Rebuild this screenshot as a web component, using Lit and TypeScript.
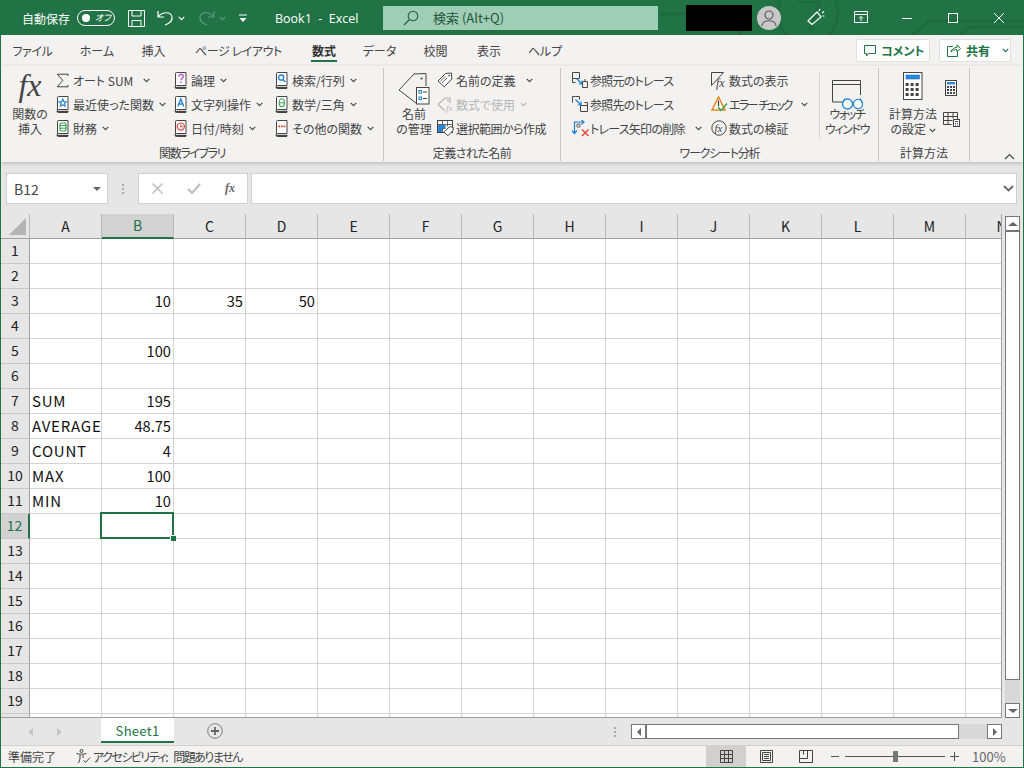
import { LitElement, css, html, svg, nothing } from "lit";
import { customElement } from "lit/decorators.js";

const GREEN = "#217346";
const COLS = "ABCDEFGHIJKLMN".split("");

// cell contents, keyed by row then column
const CELLS: Record<number, Record<string, string>> = {
  3: { B: "10", C: "35", D: "50" },
  5: { B: "100" },
  7: { A: "SUM", B: "195" },
  8: { A: "AVERAGE", B: "48.75" },
  9: { A: "COUNT", B: "4" },
  10: { A: "MAX", B: "100" },
  11: { A: "MIN", B: "10" },
};

const chev = (c = "#444") => html`<svg class="chev" width="7" height="5" viewBox="0 0 7 5">
  <path d="M.7.8 3.5 3.6 6.3.8" fill="none" stroke=${c} stroke-width="1.1" />
</svg>`;

const book = (glyph: unknown) => html`<svg width="13" height="17" viewBox="0 0 13 17">
  <path d="M1.5 14V1.5a1 1 0 0 1 1-1h9.5v13H2.5a1 1 0 0 0 0 3H12" fill="#fff" stroke="#444" />
  <path d="M1 15.5H12.5" stroke="#444" stroke-width="1.4" />
  ${glyph}
</svg>`;

const sigma = html`<svg width="13" height="15" viewBox="0 0 13 15">
  <path d="M12 3V1.2H1.2L6.8 7.4 1.2 13.8H12V12" fill="none" stroke="#444" stroke-width="1" />
</svg>`;

const gStar = svg`<path d="M6.8 3 7.9 5.6 10.5 5.8 8.5 7.5 9.2 10.2 6.8 8.8 4.4 10.2 5.1 7.5 3.1 5.8 5.7 5.6Z" fill="none" stroke="#2b88d8" stroke-width="1.2" />`;
const gDb = svg`<rect x="4" y="3" width="6" height="8" rx="1.5" fill="none" stroke="#33a04e" stroke-width="1.2" /><path d="M4 5.6h6M4 8.2h6" stroke="#33a04e" />`;
const gQ = svg`<path d="M4.8 4.4c0-2.6 4.4-2.6 4.4 0 0 1.8-2.2 1.8-2.2 3.8" fill="none" stroke="#b146c2" stroke-width="1.3" /><path d="M7 9.4v1.6" stroke="#b146c2" stroke-width="1.3" />`;
const gA = svg`<path d="M3.8 10.6 6.8 2.8 9.8 10.6M5 8h3.6" fill="none" stroke="#1b7fd0" stroke-width="1.3" />`;
const gClock = svg`<circle cx="6.8" cy="6.6" r="3.6" fill="none" stroke="#e03c31" stroke-width="1.2" /><path d="M6.8 4.6v2.2h2" fill="none" stroke="#e03c31" />`;
const gLens = svg`<circle cx="6.2" cy="5.6" r="2.6" fill="none" stroke="#1b7fd0" stroke-width="1.3" /><path d="M8.2 7.6 10.4 10" stroke="#1b7fd0" stroke-width="1.4" />`;
const gTheta = svg`<ellipse cx="6.8" cy="6.8" rx="2.6" ry="4" fill="none" stroke="#33a04e" stroke-width="1.1" /><path d="M4.4 6.8h4.8" stroke="#33a04e" />`;
const gDots = svg`<path d="M3.4 6.4h1.8M6 6.4h1.8M8.6 6.4h1.8" stroke="#e03c31" stroke-width="1.6" />`;

const tagSmall = (c = "#444") => html`<svg width="16" height="16" viewBox="0 0 16 16">
  <path d="M1 9 8.5 1.5 14.5 1 14.8 7 7.2 14.8Z" fill="#fff" stroke=${c} />
  <path d="M3.4 9.2 8.6 4M5 11 10.2 5.8" stroke=${c} stroke-width=".8" />
  <circle cx="12.2" cy="3.6" r=".9" fill=${c} />
</svg>`;

const tagOff = html`<svg width="18" height="17" viewBox="0 0 18 17">
  <path d="M1 8.5 8 2h5v5M7.5 14.5 1 8.5" fill="none" stroke="#b5b5b5" stroke-width="1.2" />
  <circle cx="11" cy="4.4" r=".9" fill="#b5b5b5" />
  <text x="9" y="15" font-size="9" font-style="italic" font-family="Liberation Serif" fill="#b5b5b5">fx</text>
</svg>`;

const selRange = html`<svg width="17" height="16" viewBox="0 0 17 16">
  <rect x=".5" y=".5" width="15" height="12" fill="#fff" stroke="#444" />
  <path d="M5.5.5v12M10.5.5v6M.5 4.5h15M.5 8.5h8" stroke="#444" stroke-width=".8" />
  <rect x="1" y="5" width="4.4" height="7" fill="#2b88d8" /><rect x="5.6" y="5" width="3" height="3.4" fill="#2b88d8" />
  <path d="M7 12.2 12.4 6.8 16 7 16.2 10.4 10.8 15.6Z" fill="#fff" stroke="#444" />
</svg>`;

const tagLarge = html`<svg width="32" height="33" viewBox="0 0 32 33">
  <path d="M1 18 16 2 28 1.5V14M18 31 1 18" fill="none" stroke="#444" />
  <circle cx="23.5" cy="6.5" r="1.1" fill="#444" />
  <rect x="18.5" y="15.5" width="12.5" height="16.5" fill="#fff" stroke="#444" />
  <rect x="21" y="18.5" width="2.6" height="2.6" fill="none" stroke="#1b7fd0" /><path d="M25 20h4" stroke="#444" />
  <rect x="21" y="25" width="2.6" height="2.6" fill="none" stroke="#1b7fd0" /><path d="M25 26.5h4" stroke="#444" />
</svg>`;

const tracePrec = html`<svg width="16" height="16" viewBox="0 0 16 16">
  <path d="M.5.5h7v6h-7zM.5 6.5v4h3" fill="none" stroke="#444" />
  <path d="M10.5 9.5h5v6h-5zM13 9.5V7" fill="none" stroke="#444" />
  <path d="M4.5 6.5 10 12M10 8.6V12H6.6" fill="none" stroke="#1b7fd0" stroke-width="1.2" />
</svg>`;

const traceDep = html`<svg width="16" height="16" viewBox="0 0 16 16">
  <path d="M3.5.5h-3v6M3.5.5h4v3" fill="none" stroke="#444" />
  <path d="M8.5 9.5h7v6h-7zM15.5 9.5V6.5h-3" fill="none" stroke="#444" />
  <path d="M3.5 3.5 9 9M9 5.6V9H5.6" fill="none" stroke="#1b7fd0" stroke-width="1.2" />
</svg>`;

const traceDel = html`<svg width="18" height="17" viewBox="0 0 18 17">
  <path d="M2.5 13V2h9" fill="none" stroke="#1b7fd0" stroke-width="1.2" />
  <path d="M0 10.5 2.5 13.5 5 10.5M9.5 0 12 2 9.5 4.2" fill="none" stroke="#1b7fd0" stroke-width="1.2" />
  <path d="M5 4h3v3H5z" fill="none" stroke="#444" stroke-width=".8" />
  <path d="M10 9.5 16.5 16M16.5 9.5 10 16" stroke="#e8412f" stroke-width="1.4" />
</svg>`;

const showFx = html`<svg class="open" width="17" height="17" viewBox="0 0 17 17">
  <path d="M12.5.5H.5v13L12.5.5" fill="none" stroke="#444" />
  <text x="5" y="14.5" font-size="12" font-style="italic" font-family="Liberation Serif" fill="#444">fx</text>
</svg>`;

const errCheck = html`<svg width="17" height="16" viewBox="0 0 17 16">
  <path d="M7.5 1 1 14H14Z" fill="#fff" stroke="#e8861c" stroke-width="1.5" />
  <path d="M7.5 4.5V10" stroke="#444" stroke-width="1.3" />
  <path d="M7 11 10 14.5 16 7.5" fill="none" stroke="#33a04e" stroke-width="1.3" />
</svg>`;

const evalFx = html`<svg width="16" height="16" viewBox="0 0 16 16">
  <circle cx="8" cy="8" r="7.2" fill="none" stroke="#444" />
  <text x="3.4" y="12" font-size="11" font-style="italic" font-family="Liberation Serif" fill="#444">fx</text>
</svg>`;

const watch = html`<svg width="31" height="31" viewBox="0 0 31 31">
  <path d="M10 22H.5V.5h28V15M.5 4.5h28" fill="none" stroke="#444" />
  <circle cx="15.5" cy="24" r="5" fill="#fff" stroke="#2b88d8" stroke-width="1.4" />
  <circle cx="26" cy="24" r="4.6" fill="#fff" stroke="#2b88d8" stroke-width="1.4" />
  <path d="M20.5 23.5h1M10.5 23 13 18.5M30.5 23 28 18.5" fill="none" stroke="#2b88d8" stroke-width="1.2" />
</svg>`;

const calcGrid = (n: number, s: number, g: number, x0: number, y0: number, rows: number) =>
  Array.from({ length: rows * n }, (_, i) =>
    svg`<rect x=${x0 + (i % n) * (s + g)} y=${y0 + Math.floor(i / n) * (s + g)} width=${s} height=${s} fill="#444" />`,
  );

const calcLarge = html`<svg width="20" height="28" viewBox="0 0 20 28">
  <rect x=".5" y=".5" width="18.5" height="27" fill="#fff" stroke="#444" />
  <rect x="3" y="3" width="13.5" height="4" fill="#2b88d8" stroke="#1b6ec2" stroke-width=".6" />
  ${calcGrid(3, 3, 2, 2.6, 11, 3)}
</svg>`;

const calcSmall = html`<svg width="12" height="16" viewBox="0 0 12 16">
  <rect x=".5" y=".5" width="11" height="15" fill="#fff" stroke="#444" />
  <rect x="2" y="2" width="8" height="2.4" fill="#2b88d8" />
  ${calcGrid(3, 2, 1, 2, 6, 3)}
</svg>`;

const sheetCalc = html`<svg width="17" height="15" viewBox="0 0 17 15">
  <path d="M.5 12.5V.5h14V7M.5 4.5h14M.5 8.5h9M.5 12.5h8M5 .5v12M10 .5v6" fill="none" stroke="#444" />
  <rect x="10.5" y="7.5" width="6" height="7" fill="#fff" stroke="#444" />
  <path d="M12 9.5h3M12 11.5h1M14 11.5h1M12 13h1M14 13h1" stroke="#444" stroke-width=".9" />
</svg>`;

const smallItem = (icon: unknown, label: string, arrow: "" | "near" | "far" = "near", off = false, cls = "") =>
  html`<div class="item ${off ? "off" : ""}">
    <span class="ico">${icon}</span><span class=${cls}>${label}</span>
    ${arrow ? html`<span class=${arrow}>${chev(off ? "#b5b5b5" : "#444")}</span>` : nothing}
  </div>`;

@customElement("app-root")
export class AppRoot extends LitElement {
  private titleBar() {
    return html`<header class="title">
      <svg class="circuit" width="1024" height="34" viewBox="0 0 1024 34">
        <g fill="none" stroke="#1c6a3e" stroke-width="3">
          <circle cx="808" cy="12" r="30" />
          <path d="M798 0h22l-10 30" />
          <path d="M660 13h60l22 20M912 34l18-14h94M960 34l10-8h54" />
        </g>
      </svg>
      <span class="auto">自動保存</span>
      <span class="toggle"><i></i><em>オフ</em></span>
      <svg class="i-save" width="17" height="17" viewBox="0 0 17 17">
        <path d="M.5.5h16v16H.5zM4 .5v5.5h9V.5M4 16.5V10.5h9v6" fill="none" stroke="#fff" />
      </svg>
      <svg class="i-undo" width="17" height="16" viewBox="0 0 17 16">
        <path d="M1 1v6h6M1.5 6.5C5 1.8 14 1 15 7c.5 3.5-2.5 6.5-7 8" fill="none" stroke="#fff" stroke-width="1.2" />
      </svg>
      <span class="m-chev">${chev("#fff")}</span>
      <svg class="i-redo" width="17" height="16" viewBox="0 0 17 16">
        <path d="M16 1v6h-6M15.5 6.5C12 1.8 3 1 2 7c-.5 3.5 2.5 6.5 7 8" fill="none" stroke="#5c9c7c" stroke-width="1.2" />
      </svg>
      <span class="m-chev">${chev("#5c9c7c")}</span>
      <svg class="i-qat" width="10" height="9" viewBox="0 0 10 9">
        <path d="M1 1h8" stroke="#fff" /><path d="M1.5 4h7L5 8Z" fill="#fff" />
      </svg>
      <span class="doc">Book1&nbsp; - &nbsp;Excel</span>
      <div class="search">
        <svg width="16" height="16" viewBox="0 0 16 16">
          <circle cx="10" cy="6" r="4.8" fill="none" stroke="#1f5f3c" stroke-width="1.1" />
          <path d="M6.5 9.5 1 15" stroke="#1f5f3c" stroke-width="1.3" />
        </svg>
        <span>検索 (Alt+Q)</span>
      </div>
      <span class="redact"></span>
      <span class="avatar">
        <svg width="16" height="16" viewBox="0 0 16 16">
          <circle cx="8" cy="5" r="4" fill="none" stroke="#5a5a5a" stroke-width="1.2" />
          <path d="M1 16c0-7 14-7 14 0" fill="none" stroke="#5a5a5a" stroke-width="1.2" />
        </svg>
      </span>
      <svg class="i-pen" width="18" height="18" viewBox="0 0 18 18">
        <path d="M1 13 10 4 14 9 5 16.5ZM5 16.5 3 15M12 3l1-2M15 5l2-1.5M15.5 8l2 0" fill="none" stroke="#fff" stroke-width="1.2" />
      </svg>
      <svg class="i-disp" width="14" height="12" viewBox="0 0 14 12">
        <path d="M.5.5h13v11H.5zM.5 3.5h13M7 10V5.5M5 7.5l2-2 2 2" fill="none" stroke="#fff" />
      </svg>
      <svg class="i-min" width="10" height="1" viewBox="0 0 10 1"><path d="M0 .5h10" stroke="#fff" /></svg>
      <svg class="i-max" width="10" height="10" viewBox="0 0 10 10"><rect x=".5" y=".5" width="9" height="9" fill="none" stroke="#fff" /></svg>
      <svg class="i-close" width="10" height="10" viewBox="0 0 10 10"><path d="M0 0 10 10M10 0 0 10" stroke="#fff" /></svg>
    </header>`;
  }

  private tabs() {
    const names = ["ファイル", "ホーム", "挿入", "ページ レイアウト", "数式", "データ", "校閲", "表示", "ヘルプ"];
    return html`<nav class="tabs">
      <div class="tablist">
        ${names.map((n) => html`<span class=${n === "数式" ? "tab on" : "tab"}>${n}</span>`)}
      </div>
      <button class="cmt">
        <svg width="12" height="12" viewBox="0 0 12 12"><path d="M.5.5h11v8H4.5L2.5 11V8.5h-2z" fill="none" stroke=${GREEN} /></svg>
        <span>コメント</span>
      </button>
      <button class="share">
        <svg width="14" height="13" viewBox="0 0 14 13">
          <path d="M6 2.5H.5v10h10V8" fill="none" stroke=${GREEN} />
          <path d="M4 8c.5-3 3-4.5 6-4.5V.8L13.5 4.5 10 8V5.5C8 5.5 5.5 6 4 8Z" fill="none" stroke=${GREEN} />
        </svg>
        <span>共有</span>
        ${chev(GREEN)}
      </button>
    </nav>`;
  }

  private ribbon() {
    return html`<section class="ribbon">
      <div class="group g1">
        <div class="body">
          <div class="big fxbtn"><span class="fx">fx</span><span>関数の<br />挿入</span></div>
          <div class="col c1">
            ${smallItem(sigma, "オート SUM", "far")}
            ${smallItem(book(gStar), "最近使った関数")}
            ${smallItem(book(gDb), "財務")}
          </div>
          <div class="col c2">
            ${smallItem(book(gQ), "論理")}
            ${smallItem(book(gA), "文字列操作")}
            ${smallItem(book(gClock), "日付/時刻")}
          </div>
          <div class="col c3">
            ${smallItem(book(gLens), "検索/行列")}
            ${smallItem(book(gTheta), "数学/三角")}
            ${smallItem(book(gDots), "その他の関数")}
          </div>
        </div>
        <div class="label tight">関数ライブラリ</div>
      </div>
      <div class="group g2">
        <div class="body">
          <div class="big namebtn"><span class="bigico">${tagLarge}</span><span>名前<br />の管理</span></div>
          <div class="col">
            ${smallItem(tagSmall(), "名前の定義", "far")}
            ${smallItem(tagOff, "数式で使用", "near", true)}
            ${smallItem(selRange, "選択範囲から作成", "", false, "n1")}
          </div>
        </div>
        <div class="label n1">定義された名前</div>
      </div>
      <div class="group g3">
        <div class="body">
          <div class="col c4">
            ${smallItem(tracePrec, "参照元のトレース", "", false, "n2")}
            ${smallItem(traceDep, "参照先のトレース", "", false, "n2")}
            ${smallItem(traceDel, "トレース矢印の削除", "far", false, "n2")}
          </div>
          <div class="col c5">
            ${smallItem(showFx, "数式の表示", "")}
            ${smallItem(errCheck, "エラー チェック", "far", false, "err")}
            ${smallItem(evalFx, "数式の検証", "")}
          </div>
          <div class="big watchbtn"><span class="bigico w">${watch}</span><span class="tight">ウォッチ<br />ウィンドウ</span></div>
        </div>
        <div class="label tight2">ワークシート分析</div>
      </div>
      <div class="group g4">
        <div class="body">
          <div class="big calcbtn">
            <span class="bigico c">${calcLarge}</span>
            <span>計算方法<br />の設定 ${chev()}</span>
          </div>
          <div class="calcside">${calcSmall}${sheetCalc}</div>
        </div>
        <div class="label">計算方法</div>
      </div>
      <svg class="collapse" width="11" height="7" viewBox="0 0 11 7"><path d="M1 6 5.5 1.5 10 6" fill="none" stroke="#444" stroke-width="1.2" /></svg>
    </section>`;
  }

  private formulaBar() {
    return html`<div class="fbar">
      <div class="namebox"><span>B12</span><i class="tri small"></i></div>
      <span class="grip"><b></b><b></b><b></b></span>
      <div class="fxbox">
        <svg width="11" height="11" viewBox="0 0 11 11"><path d="M.5.5 10.5 10.5M10.5.5.5 10.5" stroke="#bdbdbd" stroke-width="1.5" /></svg>
        <svg width="14" height="11" viewBox="0 0 14 11"><path d="M1 6 5 10 13 1" fill="none" stroke="#bdbdbd" stroke-width="2" /></svg>
        <span>fx</span>
      </div>
      <div class="input">
        <svg width="11" height="7" viewBox="0 0 11 7"><path d="M1 1 5.5 5.5 10 1" fill="none" stroke="#666" stroke-width="1.8" /></svg>
      </div>
    </div>`;
  }

  private grid() {
    const rows = Array.from({ length: 20 }, (_, i) => i + 1);
    return html`<div class="grid">
      <div class="ghead corner"><svg width="17" height="17" viewBox="0 0 17 17"><path d="M17 0V17H0Z" fill="#b4b4b4" /></svg></div>
      ${COLS.map((c) => html`<div class=${c === "B" ? "ghead sel" : "ghead"}>${c}</div>`)}
      ${rows.map(
        (r) => html`<div class=${r === 12 ? "rhead sel" : "rhead"}>${r < 20 ? r : nothing}</div>
          ${COLS.map((c) => {
            const v = CELLS[r]?.[c];
            const isText = v !== undefined && isNaN(Number(v));
            return html`<div class=${isText ? "cell txt" : "cell"}>
              ${v ?? nothing}
              ${r === 12 && c === "B" ? html`<div class="active"><i></i></div>` : nothing}
            </div>`;
          })}`,
      )}
    </div>`;
  }

  private vscroll() {
    return html`<aside class="vbar">
      <div class="btn"><i class="tri up"></i></div>
      <div class="vthumb"></div>
      <div class="vtrack"></div>
      <div class="btn"><i class="tri"></i></div>
    </aside>`;
  }

  private sheetBar() {
    return html`<div class="sheets">
      <svg class="nav" width="6" height="8" viewBox="0 0 6 8"><path d="M5 0 0 4 5 8Z" fill="#c4c4c4" /></svg>
      <svg class="nav r" width="6" height="8" viewBox="0 0 6 8"><path d="M0 0 5 4 0 8Z" fill="#c4c4c4" /></svg>
      <div class="sheet">Sheet1</div>
      <svg class="add" width="16" height="16" viewBox="0 0 16 16">
        <circle cx="8" cy="8" r="7.3" fill="none" stroke="#808080" />
        <path d="M8 4v8M4 8h8" stroke="#666" stroke-width="1.8" />
      </svg>
      <span class="grip h"><b></b><b></b><b></b></span>
      <div class="hbar">
        <div class="hbtn"><i class="tri left"></i></div>
        <div class="hthumb"></div>
        <div class="htrack"></div>
        <div class="hbtn"><i class="tri right"></i></div>
      </div>
    </div>`;
  }

  private statusBar() {
    return html`<footer class="status">
      <span class="ready">準備完了</span>
      <svg class="acc" width="15" height="15" viewBox="0 0 15 15">
        <circle cx="5.5" cy="2" r="1.5" fill="none" stroke="#444" />
        <path d="M.5 4.5c3 1 7 1 10 0M4 6v4l-1.5 4M7 6v3M7.5 11l2 2.5L14 8.5" fill="none" stroke="#444" />
      </svg>
      <span class="acct">アクセシビリティ: 問題ありません</span>
      <div class="views">
        <span class="view on">
          <svg width="13" height="13" viewBox="0 0 13 13"><path d="M.5.5h12v12H.5zM4.5.5v12M8.5.5v12M.5 4.5h12M.5 8.5h12" fill="none" stroke="#444" /></svg>
        </span>
        <span class="view">
          <svg width="13" height="13" viewBox="0 0 13 13"><path d="M.5.5h12v12H.5zM2.5 2.5h8v8h-8zM4 4.5h5M4 6.5h5M4 8.5h5" fill="none" stroke="#444" /></svg>
        </span>
        <span class="view">
          <svg width="14" height="13" viewBox="0 0 14 13"><path d="M.5.5h13v12H.5zM.5 8.5h8V.5M4.5.5v4" fill="none" stroke="#444" /></svg>
        </span>
      </div>
      <div class="zoom">
        <svg width="8" height="1" viewBox="0 0 8 1"><path d="M0 .5h8" stroke="#555" /></svg>
        <div class="slider"><i></i></div>
        <svg width="9" height="9" viewBox="0 0 9 9"><path d="M0 4.5h9M4.5 0v9" stroke="#555" /></svg>
      </div>
      <span class="pct">100%</span>
    </footer>`;
  }

  render() {
    return html`<div class="win">
      ${this.titleBar()} ${this.tabs()} ${this.ribbon()} ${this.formulaBar()}
      <div class="main">${this.grid()} ${this.vscroll()}</div>
      ${this.sheetBar()} ${this.statusBar()}
    </div>`;
  }

  static styles = css`
    :host {
      display: block;
      width: 1024px;
      height: 768px;
      overflow: hidden;
      font-family: "Noto Sans CJK JP", "Noto Sans", sans-serif;
      font-feature-settings: "palt";
      font-size: 12px;
      color: #444;
    }
    .win {
      box-sizing: border-box;
      width: 1024px;
      height: 768px;
      border: 1px solid #217346;
      display: flex;
      flex-direction: column;
      background: #e6e6e6;
    }
    svg {
      display: block;
      flex: none;
    }
    svg.open {
      overflow: visible;
    }

    /* title bar */
    .title {
      position: relative;
      height: 34px;
      flex: none;
      display: flex;
      align-items: center;
      background: #217346;
      color: #fff;
      overflow: hidden;
    }
    .title > * {
      position: relative;
    }
    .title > .circuit {
      position: absolute;
      left: -1px;
      top: 0;
    }
    .auto {
      margin-left: 21px;
      width: 50px;
    }
    .toggle {
      box-sizing: border-box;
      margin-left: 5px;
      width: 38px;
      height: 16px;
      border: 1px solid #fff;
      border-radius: 8px;
      display: flex;
      align-items: center;
      padding-left: 4px;
      gap: 5px;
    }
    .toggle i {
      width: 8px;
      height: 8px;
      border-radius: 50%;
      background: #fff;
    }
    .toggle em {
      font-size: 9px;
      line-height: 14px;
    }
    .i-save {
      margin-left: 13px;
    }
    .i-undo {
      margin-left: 12px;
    }
    .m-chev {
      margin-left: 4px;
    }
    .i-redo {
      margin-left: 13px;
    }
    .i-qat {
      margin-left: 12px;
    }
    .doc {
      margin-left: 27px;
      width: 108px;
      font-size: 12.5px;
      font-family: "Open Sans", sans-serif;
      white-space: nowrap;
    }
    .search {
      box-sizing: border-box;
      width: 275px;
      height: 24px;
      margin-top: -1px;
      background: #a0cdb5;
      color: #24563b;
      display: flex;
      align-items: center;
      padding-left: 20px;
      gap: 14px;
      font-size: 13px;
    }
    .redact {
      margin-left: 28px;
      width: 66px;
      height: 26px;
      margin-top: -1px;
      background: #000;
    }
    .avatar {
      margin-left: 5px;
      width: 24px;
      height: 24px;
      margin-top: -1px;
      border-radius: 50%;
      background: #c8c8c8;
      display: grid;
      place-items: center;
    }
    .i-pen {
      margin-left: 26px;
      margin-top: -2px;
    }
    .i-disp {
      margin-left: 29px;
      margin-top: -2px;
    }
    .i-min {
      margin-left: 34px;
    }
    .i-max {
      margin-left: 36px;
      margin-top: -1px;
    }
    .i-close {
      margin-left: 36px;
      margin-top: -1px;
    }

    /* tabs */
    .tabs {
      height: 31px;
      flex: none;
      display: flex;
      align-items: flex-start;
      background: #f3f2f1;
    }
    .tablist {
      display: grid;
      grid-template-columns: 63px 66px 47px 123px 48px 63px 49px 58px 54px;
      width: 855px;
      padding-top: 6px;
    }
    .tab {
      height: 21px;
      line-height: 20px;
      text-align: center;
      white-space: nowrap;
      position: relative;
    }
    .tab:nth-child(1),
    .tab:nth-child(4) {
      letter-spacing: -0.4px;
    }
    .tab.on {
      font-weight: 700;
      color: #333;
    }
    .tab.on::after {
      content: "";
      position: absolute;
      left: 11px;
      right: 11px;
      bottom: 0;
      height: 2px;
      background: #217346;
    }
    button {
      font: inherit;
      font-feature-settings: "palt";
      box-sizing: border-box;
      height: 23px;
      margin-top: 4px;
      background: #fff;
      border: 1px solid #e1dfdd;
      border-radius: 2px;
      color: #217346;
      font-weight: 700;
      display: flex;
      align-items: center;
      padding: 0;
    }
    .cmt {
      width: 74px;
      gap: 5px;
      padding-left: 7px;
    }
    .share {
      margin-left: 9px;
      width: 72px;
      padding-left: 7px;
      gap: 5px;
    }
    .share .chev {
      margin-left: 7px;
    }

    /* ribbon */
    .ribbon {
      position: relative;
      height: 96px;
      flex: none;
      display: flex;
      background: #f3f2f1;
      box-shadow: 0 1px 4px rgba(0, 0, 0, 0.22);
      z-index: 1;
    }
    .group {
      box-sizing: border-box;
      height: 93px;
      margin-top: 2px;
      border-right: 1px solid #c8c6c4;
      display: flex;
      flex-direction: column;
    }
    .g1 {
      width: 383px;
    }
    .g2 {
      width: 177px;
    }
    .g3 {
      width: 318px;
    }
    .g4 {
      width: 91px;
    }
    .body {
      height: 76px;
      display: flex;
    }
    .label {
      text-align: center;
      line-height: 17px;
      white-space: nowrap;
    }
    .tight {
      letter-spacing: -1.4px;
    }
    .tight2 {
      letter-spacing: -1.2px;
    }
    .n1 {
      letter-spacing: -0.5px;
    }
    .n2 {
      letter-spacing: -0.75px;
    }
    .err {
      letter-spacing: -2px;
      word-spacing: 1px;
    }
    .col {
      display: flex;
      flex-direction: column;
    }
    .item {
      height: 24px;
      display: flex;
      align-items: center;
      white-space: nowrap;
    }
    .item.off {
      color: #b5b5b5;
    }
    .ico {
      width: 17px;
      flex: none;
    }
    .near {
      margin-left: 5px;
    }
    .far {
      margin-left: 10px;
    }
    .big {
      display: flex;
      flex-direction: column;
      align-items: center;
      text-align: center;
      line-height: 15px;
      white-space: nowrap;
      padding-top: 1px;
    }
    .big .chev {
      display: inline-block;
      vertical-align: 1px;
    }
    .fxbtn {
      margin-left: 3px;
      width: 52px;
    }
    .fx {
      height: 37px;
      font: italic 32px/32px "Liberation Serif", serif;
      color: #444;
    }
    .c1 {
      width: 118px;
    }
    .c2 {
      width: 101px;
    }
    .namebtn {
      margin-left: 8px;
      width: 44px;
    }
    .bigico {
      height: 37px;
      padding-top: 3px;
      box-sizing: border-box;
    }
    .bigico.w {
      padding-top: 6px;
    }
    .g2 .col {
      margin-left: 1px;
    }
    .g2 .col .ico {
      width: 19px;
    }
    .g3 .ico {
      width: 18px;
    }
    .c4 {
      margin-left: 11px;
      width: 139px;
    }
    .c5 {
      width: 108px;
    }
    .watchbtn {
      box-sizing: border-box;
      width: 58px;
      padding-right: 3px;
      border-left: 1px solid #d6d4d2;
      height: 66px;
      margin-top: 5px;
    }
    .watchbtn span:last-child {
      margin-top: -5px;
    }
    .calcbtn {
      margin-left: 8px;
      width: 52px;
    }
    .calcside {
      margin-left: 2px;
      display: flex;
      flex-direction: column;
      align-items: center;
      width: 20px;
      padding-top: 12px;
      gap: 16px;
    }
    .collapse {
      position: absolute;
      right: 8px;
      bottom: 2px;
    }

    /* formula bar */
    .fbar {
      height: 52px;
      flex: none;
      box-sizing: border-box;
      padding: 11px 6px 0 5px;
      display: flex;
      align-items: flex-start;
    }
    .namebox,
    .fxbox,
    .input {
      box-sizing: border-box;
      height: 31px;
      background: #fff;
      border: 1px solid #d0d0d0;
      display: flex;
      align-items: center;
    }
    .namebox {
      width: 102px;
      padding: 1px 6px 0 7px;
      justify-content: space-between;
      font-size: 14px;
      color: #444;
    }
    .tri {
      width: 0;
      height: 0;
      border-left: 5px solid transparent;
      border-right: 5px solid transparent;
      border-top: 4px solid #666;
    }
    .tri.small {
      border-left-width: 4px;
      border-right-width: 4px;
    }
    .tri.up {
      border-top: 0;
      border-bottom: 4px solid #666;
    }
    .tri.left {
      border-top: 4px solid transparent;
      border-bottom: 4px solid transparent;
      border-left: 0;
      border-right: 4px solid #666;
    }
    .tri.right {
      border-top: 4px solid transparent;
      border-bottom: 4px solid transparent;
      border-right: 0;
      border-left: 4px solid #666;
    }
    .grip {
      width: 30px;
      height: 31px;
      display: flex;
      flex-direction: column;
      align-items: center;
      justify-content: center;
      gap: 2px;
    }
    .grip b {
      width: 2px;
      height: 2px;
      background: #aaa;
    }
    .fxbox {
      width: 110px;
      padding: 0 12px 0 13px;
      justify-content: space-between;
    }
    .fxbox span {
      font: italic 700 12px "Liberation Serif", serif;
      color: #666;
    }
    .input {
      margin-left: 3px;
      flex: 1;
      justify-content: flex-end;
      padding-right: 2px;
    }

    /* sheet grid */
    .main {
      height: 504px;
      flex: none;
      display: flex;
    }
    .grid {
      box-sizing: border-box;
      width: 1001px;
      height: 504px;
      overflow: hidden;
      display: grid;
      grid-template-columns: 29px repeat(14, 72px);
      grid-auto-rows: 25px;
      background: #fff;
      border-right: 1px solid #9f9f9f;
      border-bottom: 1px solid #9f9f9f;
      font-size: 14.67px;
      color: #111;
    }
    .ghead,
    .rhead {
      box-sizing: border-box;
      background: #e6e6e6;
      display: grid;
      place-items: center;
      padding-bottom: 1px;
      border-right: 1px solid #b8b8b8;
      border-bottom: 1px solid #9f9f9f;
      color: #222;
      font-size: 14px;
    }
    .rhead {
      padding-bottom: 2px;
      border-right: 1px solid #9f9f9f;
      border-bottom: 1px solid #c8c8c8;
    }
    .ghead.sel {
      background: #d2d2d2;
      border-bottom: 2px solid #217346;
      color: #217346;
    }
    .rhead.sel {
      background: #d2d2d2;
      border-right: 2px solid #217346;
      color: #217346;
    }
    .corner {
      display: flex;
      align-items: flex-end;
      justify-content: flex-end;
      padding: 0 3px 3px 0;
    }
    .cell {
      position: relative;
      box-sizing: border-box;
      border-right: 1px solid #d4d4d4;
      border-bottom: 1px solid #d4d4d4;
      padding: 0 2px;
      line-height: 23px;
      text-align: right;
      white-space: nowrap;
    }
    .cell.txt {
      text-align: left;
      font-size: 15px;
      letter-spacing: 0.8px;
    }
    .active {
      position: absolute;
      box-sizing: border-box;
      left: -2px;
      top: -2px;
      right: -1px;
      bottom: -1px;
      border: 2px solid #217346;
      z-index: 2;
    }
    .active i {
      position: absolute;
      right: -4px;
      bottom: -4px;
      width: 5px;
      height: 5px;
      background: #217346;
      border: 1px solid #fff;
      border-width: 1px 0 0 1px;
    }
    .vbar {
      box-sizing: border-box;
      margin: 2px 0 0 3px;
      width: 15px;
      height: 502px;
      display: flex;
      flex-direction: column;
    }
    .btn {
      box-sizing: border-box;
      height: 15px;
      flex: none;
      background: #fff;
      border: 1px solid #777;
      display: grid;
      place-items: center;
    }
    .vthumb {
      box-sizing: border-box;
      height: 450px;
      flex: none;
      background: #fff;
      border: 1px solid #777;
      border-top-width: 2px;
      margin-top: -1px;
    }
    .vtrack {
      flex: 1;
      background: #d8d8d8;
    }

    /* sheet tabs */
    .sheets {
      height: 27px;
      flex: none;
      display: flex;
      align-items: flex-start;
      box-sizing: border-box;
    }
    .nav {
      margin-left: 27px;
      margin-top: 10px;
    }
    .nav.r {
      margin-left: 23px;
    }
    .sheet {
      box-sizing: border-box;
      margin-left: 38px;
      width: 73px;
      height: 25px;
      background: #fff;
      border-bottom: 2px solid #217346;
      color: #217346;
      text-align: center;
      font-size: 13px;
      line-height: 25px;
      letter-spacing: 0.3px;
    }
    .add {
      margin-left: 33px;
      margin-top: 5px;
    }
    .grip.h {
      margin-left: 384px;
      width: 16px;
      height: 27px;
    }
    .hbar {
      margin-top: 6px;
      margin-left: 8px;
      width: 371px;
      height: 15px;
      display: flex;
    }
    .hbtn {
      box-sizing: border-box;
      width: 15px;
      background: #fff;
      border: 1px solid #777;
      display: grid;
      place-items: center;
    }
    .hthumb {
      box-sizing: border-box;
      width: 314px;
      background: #fff;
      border: 1px solid #777;
      border-left-width: 2px;
      margin-left: -1px;
    }
    .htrack {
      flex: 1;
      background: #d8d8d8;
    }

    /* status bar */
    .status {
      height: 22px;
      box-sizing: border-box;
      flex: none;
      border-top: 1px solid #d0d0d0;
      background: #f3f2f1;
      display: flex;
      align-items: center;
      white-space: nowrap;
    }
    .ready {
      margin-left: 7px;
      width: 68px;
    }
    .acc {
      margin-right: 2px;
    }
    .acct {
      width: 613px;
      flex: none;
      letter-spacing: -1.5px;
      word-spacing: 5px;
    }
    .views {
      display: flex;
      align-self: stretch;
    }
    .view {
      width: 40px;
      display: grid;
      place-items: center;
    }
    .view.on {
      background: #d2d0ce;
    }
    .zoom {
      margin-left: 5px;
      display: flex;
      align-items: center;
      gap: 5px;
    }
    .slider {
      position: relative;
      margin-left: 1px;
      width: 100px;
      height: 1px;
      background: #555;
    }
    .slider i {
      position: absolute;
      left: 48px;
      top: -5px;
      width: 5px;
      height: 11px;
      background: #777;
    }
    .pct {
      margin-left: 13px;
      font-size: 13px;
      color: #666;
    }
  `;
}
